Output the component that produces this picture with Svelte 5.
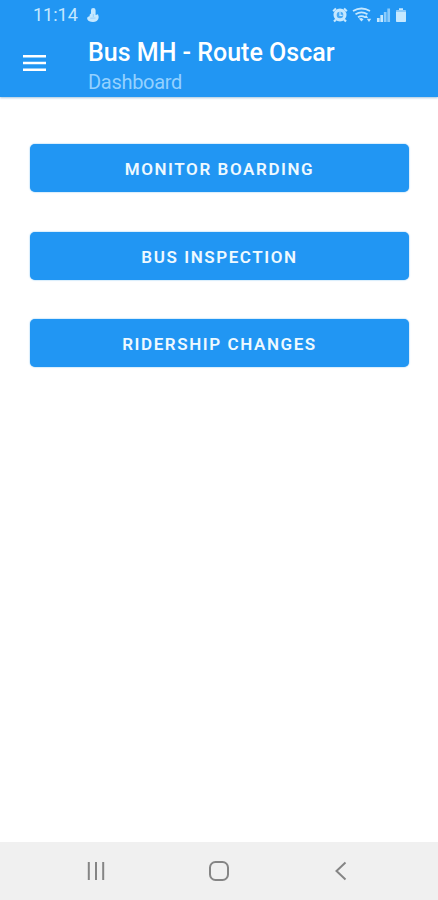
<script>
  const actions = ['Monitor Boarding', 'Bus Inspection', 'Ridership Changes'];
</script>

<div class="screen">
  <header>
    <div class="status">
      <span class="time">11:14</span>
      <svg class="notice" width="14" height="16" viewBox="0 0 14 16" fill="currentColor">
        <path d="M5 3.200Q5 1 7.300 1t2.300 2.200V8l2.400-.8q1.200 2.800.3 4.900Q11 15 7 15q-4.500 0-5.700-2.700-.7-2 .8-2.600l1.400-.5Q3.300 7.300 5 6.500Z" />
        <path d="M7.300 7v3M4.300 11.200l5.200-.2" stroke="#2196f3" stroke-width=".8" opacity=".35" />
      </svg>
      <svg class="system" width="78" height="18" viewBox="0 0 78 18" fill="none" stroke="currentColor">
        <circle cx="10" cy="9" r="4.900" stroke-width="3.200" fill="currentColor" fill-opacity=".25" />
        <path d="M10 5.800V9.300h2.500" stroke-width="1.300" />
        <path d="M3.200 5.200 6 2.500M14 2.500l2.800 2.700M6 13.500l-2 2M14 13.500l2 2" stroke-width="2.200" />
        <path d="M23 5q8.500-5 17 0M25.500 8.200q6-3.600 12 0M28 11.200q3.500-2.200 7 0" stroke-width="1.800" />
        <path d="m28.800 12.600 2.700 3 2-2.400-2-1.200Z" fill="currentColor" stroke="none" />
        <path d="m34 12 2.100-3 2.100 3ZM36.800 12.800h4.400L39 16Z" fill="currentColor" stroke="none" />
        <path d="M48.300 12v4M51.700 9v7" stroke-width="2.700" />
        <path d="M55.200 6v10M58.700 2.500V16" stroke-width="2.700" opacity=".65" />
        <path d="M69 2.200h4V4h2.200q.8 0 .8.800v10.400q0 .8-.8.800h-8.400q-.8 0-.8-.8V4.800q0-.8.800-.8H69Z" fill="currentColor" stroke="none" />
        <path d="M66 5h10" stroke="#2196f3" stroke-width="2" opacity=".35" />
      </svg>
    </div>
    <div class="toolbar">
      <button class="menu" aria-label="Menu">
        <svg width="24" height="18" viewBox="0 0 24 18" fill="#fff">
          <path d="M0 1h23v2.600H0ZM0 7.700h23v2.600H0ZM0 14.400h23V17H0Z" />
        </svg>
      </button>
      <div class="heading">
        <h1>Bus MH - Route Oscar</h1>
        <p>Dashboard</p>
      </div>
    </div>
  </header>

  <main>
    {#each actions as action}
      <button class="action">{action}</button>
    {/each}
  </main>

  <nav>
    <button aria-label="Recent apps">
      <svg width="24" height="24" viewBox="0 0 24 24"><path d="M4.800 3v18M12 3v18M19.200 3v18" /></svg>
    </button>
    <button aria-label="Home">
      <svg width="24" height="24" viewBox="0 0 24 24"><rect x="3" y="3" width="18" height="18" rx="5.500" /></svg>
    </button>
    <button aria-label="Back">
      <svg width="24" height="24" viewBox="0 0 24 24"><path d="m16.500 3.500-9 8.500 9 8.500" /></svg>
    </button>
  </nav>
</div>

<style>
  :global(body) {
    margin: 0;
  }
  .screen {
    box-sizing: border-box;
    width: 438px;
    height: 900px;
    display: flex;
    flex-direction: column;
    background: #fff;
    font-family: Roboto, sans-serif;
  }
  button {
    border: 0;
    padding: 0;
    font-family: inherit;
  }
  svg {
    display: block;
  }
  header {
    height: 97px;
    background: #2196f3;
    box-shadow: 0 1px 2px rgba(33, 110, 170, 0.4);
  }
  .status {
    box-sizing: border-box;
    height: 31px;
    display: flex;
    align-items: center;
    padding: 0 30px 1px 33px;
    color: #c5e8ff;
  }
  .time {
    font-size: 18px;
    line-height: 30px;
  }
  .notice {
    margin-left: 8px;
  }
  .system {
    margin-left: auto;
  }
  .toolbar {
    display: flex;
    height: 66px;
  }
  .menu {
    width: 88px;
    height: 64px;
    padding-left: 23px;
    background: none;
  }
  .heading {
    padding-top: 7px;
  }
  h1 {
    margin: 0;
    font-size: 25px;
    line-height: 30px;
    font-weight: 500;
    color: #fff;
    white-space: nowrap;
  }
  p {
    margin: 0;
    font-size: 20px;
    line-height: 28px;
    letter-spacing: -0.300px;
    color: #94d1ff;
  }
  main {
    flex: 1;
    display: flex;
    flex-direction: column;
    gap: 39.500px;
    padding: 47.300px 29px 0 30px;
  }
  .action {
    height: 48px;
    padding-top: 1.500px;
    border-radius: 5px;
    background: #2196f3;
    box-shadow: 0 0 1.500px #4ca9ee;
    color: #eef9ff;
    font-size: 17px;
    font-weight: 600;
    letter-spacing: 1.580px;
    text-transform: uppercase;
  }
  nav {
    height: 58px;
    display: flex;
    justify-content: center;
    gap: 98.500px;
    padding-right: 1px;
    background: #f0f0f0;
  }
  nav button {
    display: flex;
    align-items: center;
    background: none;
  }
  nav svg {
    fill: none;
    stroke: #858585;
    stroke-width: 2;
  }
</style>
